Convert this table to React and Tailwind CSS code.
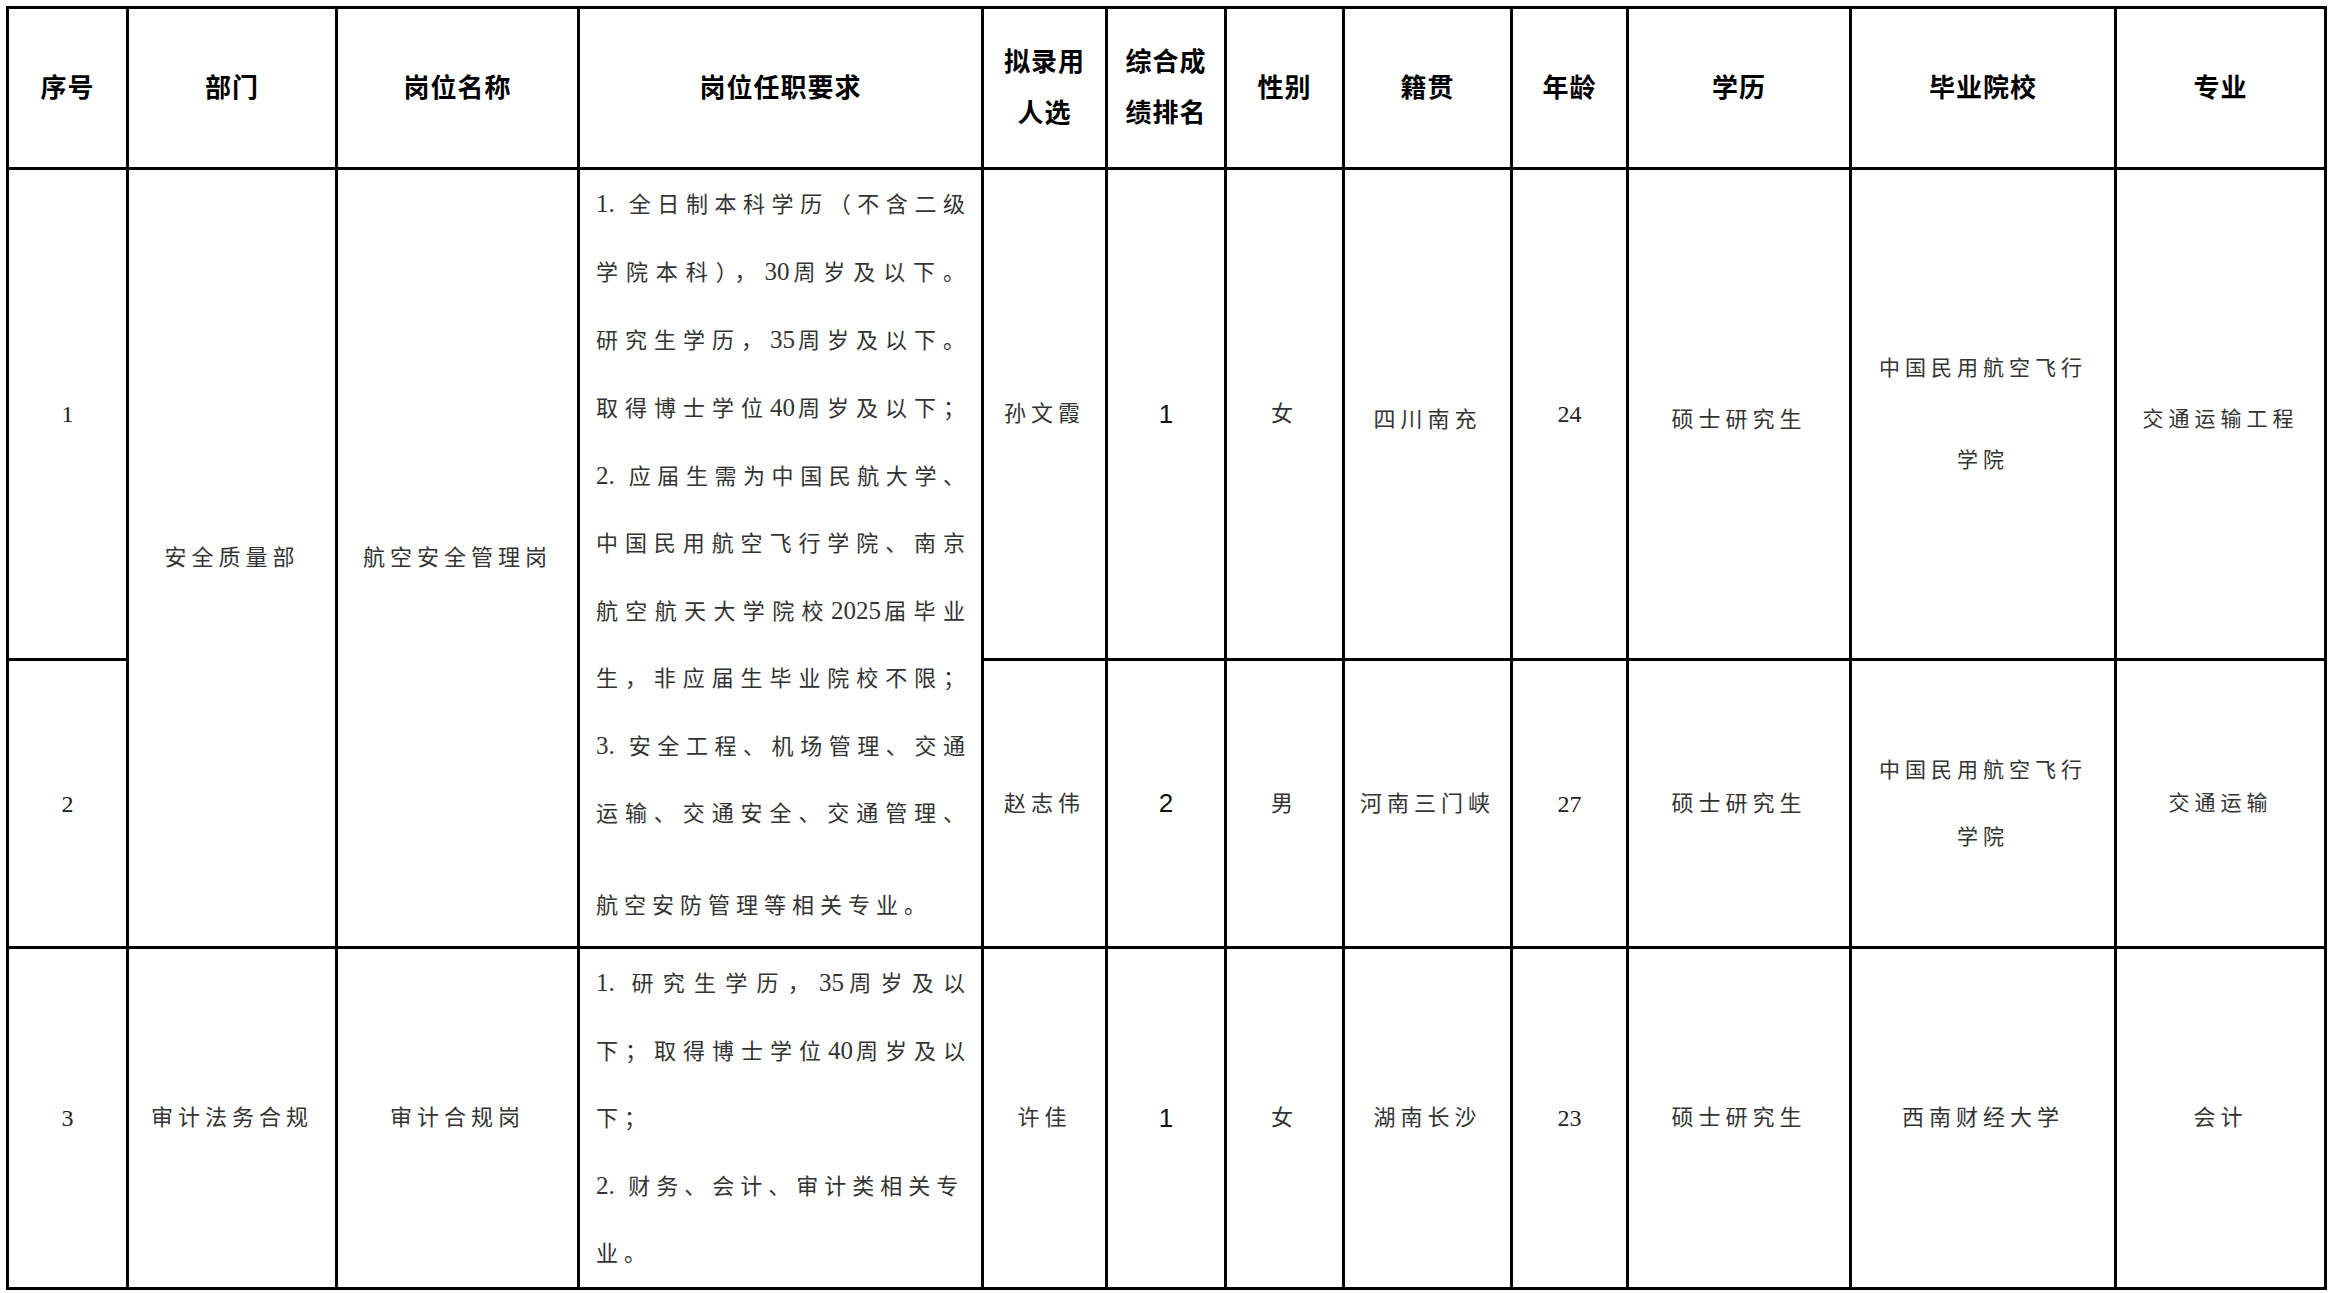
import React from 'react';

const cols = [120, 209, 242, 404, 124, 119, 118, 168, 116, 223, 265, 210];

const headers = [
    ['序号'],
    ['部门'],
    ['岗位名称'],
    ['岗位任职要求'],
    ['拟录用', '人选'],
    ['综合成', '绩排名'],
    ['性别'],
    ['籍贯'],
    ['年龄'],
    ['学历'],
    ['毕业院校'],
    ['专业'],
];

const req1 = [
    { t: '1. 全日制本科学历（不含二级', full: true },
    { t: '学院本科），30周岁及以下。', full: true },
    { t: '研究生学历，35周岁及以下。', full: true },
    { t: '取得博士学位40周岁及以下；', full: true },
    { t: '2. 应届生需为中国民航大学、', full: true },
    { t: '中国民用航空飞行学院、南京', full: true },
    { t: '航空航天大学院校2025届毕业', full: true },
    { t: '生，非应届生毕业院校不限；', full: true },
    { t: '3. 安全工程、机场管理、交通', full: true },
    { t: '运输、交通安全、交通管理、', full: true },
    { t: '航空安防管理等相关专业。', full: false, gap: true },
];

const req3 = [
    { t: '1. 研究生学历，35周岁及以', full: true },
    { t: '下；取得博士学位40周岁及以', full: true },
    { t: '下；', full: false },
    { t: '2. 财务、会计、审计类相关专', full: false },
    { t: '业。', full: false },
];

const cell = "border-[3px] border-black text-center align-middle p-0";
const body = "text-[22px] text-[#333] tracking-[5px] leading-[32px]";
const num = "font-['Liberation_Serif',serif] text-[24px] text-[#222]";
const rank = "font-['Liberation_Sans',sans-serif] text-[26px] text-[#111]";

// digits stay tight, only the last one keeps the spacing
const renderText = (t) =>
    t.split(/(\d+\.?)/).map((part, i) => {
        if (!/\d/.test(part)) return part;
        const head = part.slice(0, -1);
        const tail = part.slice(-1);
        return (
            <span key={i} className="text-[25px]">
                <span className="tracking-[0px]">{head}</span>
                <span className="tracking-[2px]">{tail}</span>
            </span>
        );
    });

const Req = ({ lines }) => (
    <div className="pl-[16px] pr-[10px]">
        {lines.map((l, i) => (
            <div
                key={i}
                className={
                    "text-[22px] text-[#333] tracking-[6px] leading-[67px] whitespace-nowrap " +
                    (l.full ? "text-justify [text-align-last:justify]" : "text-left") +
                    (l.gap ? " mt-[25px]" : "")
                }
            >
                {renderText(l.t)}
            </div>
        ))}
    </div>
);

const App = () => {
    return (
        <div className="w-[2334px] h-[1293px] bg-white pt-[6px] pl-[6px] font-['Liberation_Serif','Noto_Sans_CJK_SC',serif]">
            <table className="table-fixed border-collapse w-[2318px]">
                <colgroup>
                    {cols.map((w, i) => (
                        <col key={i} style={{ width: w }} />
                    ))}
                </colgroup>
                <thead>
                    <tr className="h-[161px]">
                        {headers.map((h, i) => (
                            <th key={i} className={cell + " font-bold text-[26px] text-black tracking-[1px] leading-[51px]"}>
                                {h.map((line, j) => (
                                    <div key={j}>{line}</div>
                                ))}
                            </th>
                        ))}
                    </tr>
                </thead>
                <tbody>
                    <tr className="h-[491px]">
                        <td className={cell + " " + num}>1</td>
                        <td rowSpan={2} className={cell + " " + body}>安全质量部</td>
                        <td rowSpan={2} className={cell + " " + body}>航空安全管理岗</td>
                        <td rowSpan={2} className={cell + " !align-top"}>
                            <Req lines={req1} />
                        </td>
                        <td className={cell + " " + body}>孙文霞</td>
                        <td className={cell + " " + rank}>1</td>
                        <td className={cell + " " + body}>女</td>
                        <td className={cell + " " + body + " pt-[12px]"}>四川南充</td>
                        <td className={cell + " " + num}>24</td>
                        <td className={cell + " " + body + " pt-[12px]"}>硕士研究生</td>
                        <td className={cell + " text-[21px] text-[#333] tracking-[5px] leading-[92px]"}>
                            <div>中国民用航空飞行</div>
                            <div>学院</div>
                        </td>
                        <td className={cell + " text-[21px] text-[#333] tracking-[5px] pt-[12px]"}>交通运输工程</td>
                    </tr>
                    <tr className="h-[288px]">
                        <td className={cell + " " + num}>2</td>
                        <td className={cell + " " + body}>赵志伟</td>
                        <td className={cell + " " + rank}>2</td>
                        <td className={cell + " " + body}>男</td>
                        <td className={cell + " " + body}>河南三门峡</td>
                        <td className={cell + " " + num}>27</td>
                        <td className={cell + " " + body}>硕士研究生</td>
                        <td className={cell + " text-[21px] text-[#333] tracking-[5px] leading-[67px]"}>
                            <div>中国民用航空飞行</div>
                            <div>学院</div>
                        </td>
                        <td className={cell + " text-[21px] text-[#333] tracking-[5px]"}>交通运输</td>
                    </tr>
                    <tr className="h-[339px]">
                        <td className={cell + " " + num}>3</td>
                        <td className={cell + " " + body}>审计法务合规</td>
                        <td className={cell + " " + body}>审计合规岗</td>
                        <td className={cell + " !align-top"}>
                            <Req lines={req3} />
                        </td>
                        <td className={cell + " " + body}>许佳</td>
                        <td className={cell + " " + rank}>1</td>
                        <td className={cell + " " + body}>女</td>
                        <td className={cell + " " + body}>湖南长沙</td>
                        <td className={cell + " " + num}>23</td>
                        <td className={cell + " " + body}>硕士研究生</td>
                        <td className={cell + " " + body}>西南财经大学</td>
                        <td className={cell + " " + body}>会计</td>
                    </tr>
                </tbody>
            </table>
        </div>
    );
};

export default App;
